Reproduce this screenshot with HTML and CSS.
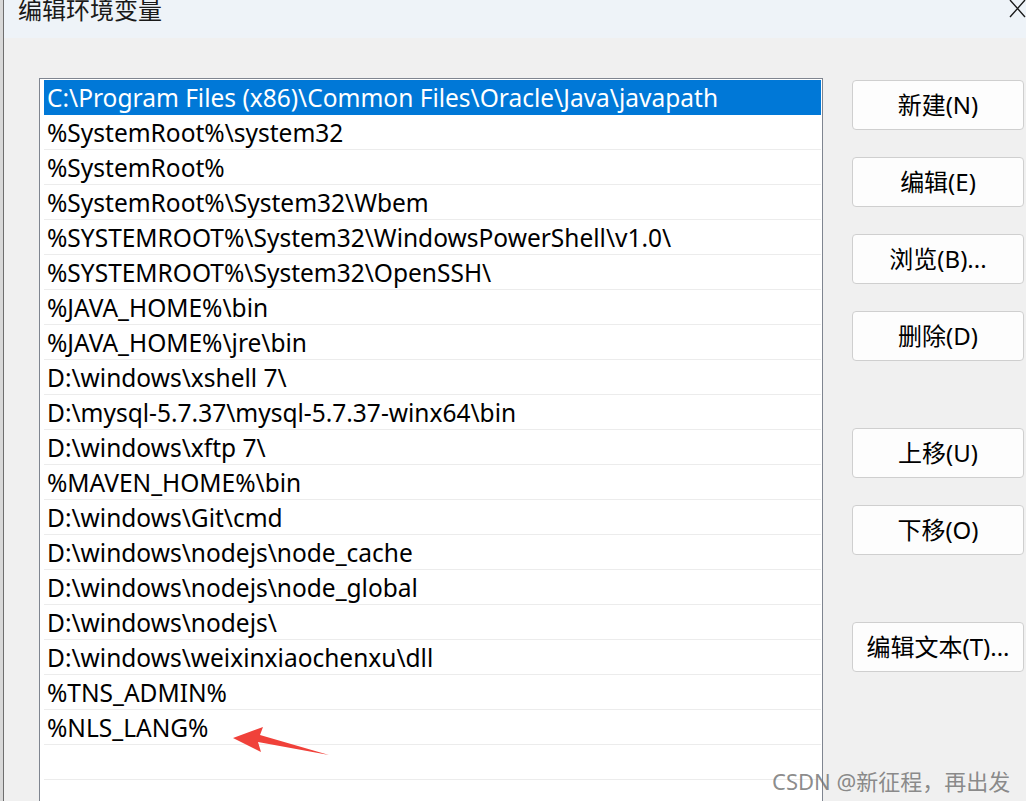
FILE: index.html
```html
<!DOCTYPE HTML>
<html>
<head>
	<meta charset="utf-8">
	<title>编辑环境变量</title>
	<link rel="stylesheet" href="styles.css">
</head>
<body>
	<div class="screen">
		<div class="edge"></div>
		<div class="dialog">
			<div class="titlebar">
				<span class="title">编辑环境变量</span>
				<svg class="close" width="18" height="20" viewBox="0 0 18 20">
					<path d="M2 0 L17 17 M17 0 L2 17" stroke="#1a1a1a" stroke-width="1.4" fill="none"/>
				</svg>
			</div>
			<div class="content">
				<div class="list">
					<div class="row selected">C:\Program Files (x86)\Common Files\Oracle\Java\javapath</div>
					<div class="row">%SystemRoot%\system32</div>
					<div class="row">%SystemRoot%</div>
					<div class="row">%SystemRoot%\System32\Wbem</div>
					<div class="row">%SYSTEMROOT%\System32\WindowsPowerShell\v1.0\</div>
					<div class="row">%SYSTEMROOT%\System32\OpenSSH\</div>
					<div class="row">%JAVA_HOME%\bin</div>
					<div class="row">%JAVA_HOME%\jre\bin</div>
					<div class="row">D:\windows\xshell 7\</div>
					<div class="row">D:\mysql-5.7.37\mysql-5.7.37-winx64\bin</div>
					<div class="row">D:\windows\xftp 7\</div>
					<div class="row">%MAVEN_HOME%\bin</div>
					<div class="row">D:\windows\Git\cmd</div>
					<div class="row">D:\windows\nodejs\node_cache</div>
					<div class="row">D:\windows\nodejs\node_global</div>
					<div class="row">D:\windows\nodejs\</div>
					<div class="row">D:\windows\weixinxiaochenxu\dll</div>
					<div class="row">%TNS_ADMIN%</div>
					<div class="row">%NLS_LANG%</div>
					<div class="row"></div>
					<div class="row"></div>
				</div>
				<div class="buttons">
					<div class="btn">新建(N)</div>
					<div class="btn">编辑(E)</div>
					<div class="btn">浏览(B)...</div>
					<div class="btn">删除(D)</div>
					<div class="btn gap-top">上移(U)</div>
					<div class="btn">下移(O)</div>
					<div class="btn gap-top">编辑文本(T)...</div>
				</div>
			</div>
		</div>
		<svg class="arrow" width="110" height="40" viewBox="0 0 110 40">
			<path d="M2 12 L32 1 L29 9 L98 29 L27 16 L30 26 Z" fill="#f0413a"/>
		</svg>
		<div class="watermark">CSDN @新征程，再出发</div>
	</div>
</body>
</html>
```

FILE: styles.css
```css
*, *::after, *::before{
	box-sizing: border-box;
	margin: 0;
	padding: 0;
}
html, body{
	width: 100%;
	height: 100%;
	overflow: hidden;
}
body{
	background-color: #f0f0f0;
	font-family: "Noto Sans", "Noto Sans CJK SC", sans-serif;
	color: #000;
}
.screen{
	position: relative;
	display: flex;
	width: 1026px;
	height: 801px;
}
.edge{
	width: 4px;
	background-color: #d8d8d8;
	border-right: 1px solid #6e6e6e;
}
.dialog{
	flex: 1;
	display: flex;
	flex-direction: column;
	overflow: hidden;
}
.titlebar{
	flex-shrink: 0;
	height: 38px;
	background-color: #eef3f8;
	display: flex;
	justify-content: space-between;
	align-items: flex-start;
	padding-left: 14px;
}
.title{
	font-size: 24px;
	line-height: 24px;
	margin-top: -2px;
	color: #1a1a1a;
}
.close{
	display: block;
}
.content{
	flex: 1;
	display: flex;
	align-items: flex-start;
	padding: 40px 0 0 35px;
	overflow: hidden;
}
.list{
	flex-shrink: 0;
	width: 784px;
	height: 760px;
	background-color: #fff;
	border: 1px solid #7f8590;
	border-bottom: none;
	padding: 1px 1px 0 4px;
}
.row{
	height: 35px;
	line-height: 36px;
	font-size: 24.5px;
	padding-left: 3px;
	border-bottom: 1px solid #ececec;
	white-space: nowrap;
	overflow: hidden;
}
.row.selected{
	background-color: #0078d7;
	color: #fff;
	border-bottom-color: #0078d7;
}
.buttons{
	flex-shrink: 0;
	margin-left: 29px;
	width: 172px;
	padding-top: 2px;
	display: flex;
	flex-direction: column;
	gap: 27px;
}
.btn{
	height: 50px;
	background-color: #fdfdfd;
	border: 1px solid #cfcfcf;
	border-radius: 4px;
	font-size: 24px;
	line-height: 48px;
	text-align: center;
	white-space: nowrap;
}
.gap-top{
	margin-top: 40px;
}
.arrow{
	position: absolute;
	left: 231px;
	top: 726px;
}
.watermark{
	position: absolute;
	left: 772px;
	top: 768px;
	font-size: 22px;
	line-height: 26px;
	color: rgba(110, 110, 110, 0.8);
}
```
